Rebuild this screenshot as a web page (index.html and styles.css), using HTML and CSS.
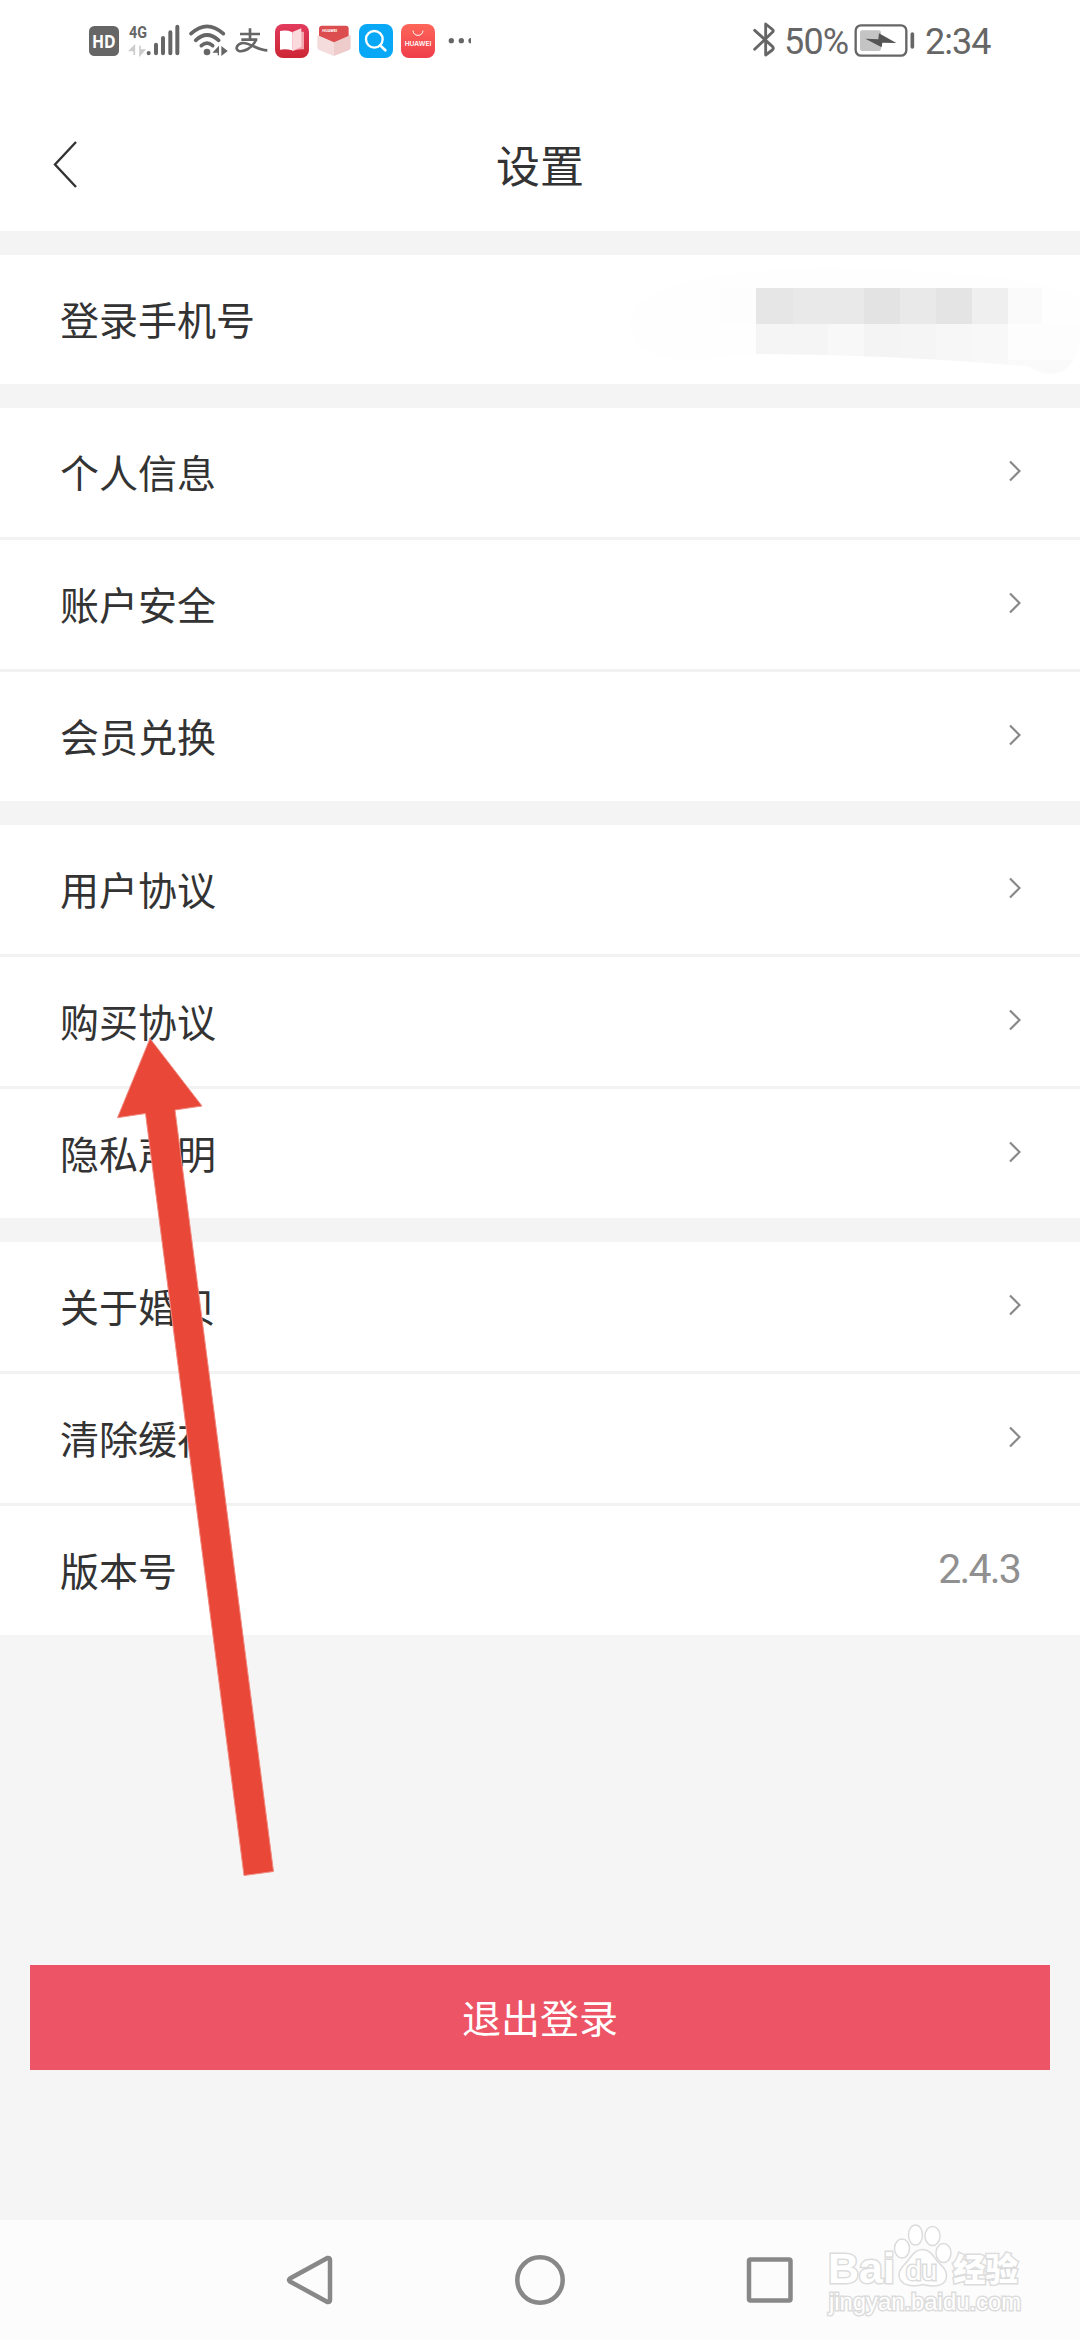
FILE: index.html
```html
<!DOCTYPE html>
<html lang="zh-CN">
<head>
<meta charset="utf-8">
<title>设置</title>
<link rel="stylesheet" href="styles.css">
</head>
<body>
<div class="screen">
  <div class="status">
    <div class="status-left">
      <svg width="35" height="65" viewBox="27 0 105 195"><rect x="27" y="48" width="90" height="90" rx="16" fill="#666"/><text class="hd" x="36" y="115" textLength="71" lengthAdjust="spacingAndGlyphs">HD</text></svg>
      <svg width="60" height="65" viewBox="132 0 180 195"><text class="net" x="147" y="83" textLength="54" lengthAdjust="spacingAndGlyphs">4G</text><path d="M163 135V108l-13 13h13M180 107v28l13-15h-13" fill="#ccc" stroke="#ccc" stroke-width="5"/><g stroke="#666" stroke-width="12" stroke-linecap="round"><path d="M206 129v1M228 104v26M249 84v46M271 67v63M292 50v80"/></g></svg>
      <svg width="46" height="65" viewBox="312 0 138 195"><g fill="none" stroke="#666" stroke-width="11" stroke-linecap="round"><path d="M333 71Q381 27 430 71M347 91Q381 59 416 91M364 107Q381 92 398 107"/></g><circle cx="381" cy="126" r="10" fill="#666"/><path d="M415 112v24M402 126l13-14v14zM426 112v22l14-11z" fill="#666" stroke="#666" stroke-width="4"/></svg>
      <svg width="41" height="65" viewBox="450 0 123 195"><g fill="none" stroke="#666" stroke-width="8"><path d="M480 72h60M510 55v33M484 89h48M528 90C515 117 490 126 477 123C464 119 470 101 488 99C510 98 533 121 562 121"/></g></svg>
      <svg width="42" height="65" viewBox="573 0 126 195"><defs><linearGradient id="read" x2="0" y2="1"><stop stop-color="#e23b5d"/><stop offset="1" stop-color="#cc2634"/></linearGradient></defs><rect x="585" y="42" width="102" height="102" rx="24" fill="url(#read)"/><path d="M600 63q19-4 36 3v55q-17-5-36-2z" fill="#fff"/><path d="M672 65q-19-1-36 6v52q17-6 36-5z" fill="#f3a6ad"/><path d="M637 66l27-11v55l-27 13z" fill="#fbdadd"/></svg>
      <svg width="42" height="65" viewBox="699 0 126 195"><rect x="717" y="47" width="89" height="60" rx="9" fill="#dc4d50"/><text class="box-label" x="727" y="66">HUAWEI</text><path d="M712 75l50 22v41l-43-17q-7-2-7-9z" fill="#f4dcdc"/><path d="M812 75l-50 22v41l44-17q6-2 6-9z" fill="#efcccc"/></svg>
      <svg width="42" height="65" viewBox="825 0 126 195"><rect x="837" y="42" width="102" height="102" rx="24" fill="#08a8f7"/><circle cx="883" cy="88" r="25" fill="none" stroke="#fff" stroke-width="7"/><path d="M900 106l16 15" stroke="#fff" stroke-width="8" stroke-linecap="round"/></svg>
      <svg width="42" height="65" viewBox="951 0 126 195"><defs><linearGradient id="shop" x2="0" y2="1"><stop stop-color="#ff6659"/><stop offset="1" stop-color="#ee3e4b"/></linearGradient></defs><rect x="963" y="42" width="102" height="102" rx="24" fill="url(#shop)"/><path d="M999 62q2 14 15 14t15-14" fill="none" stroke="#fff" stroke-width="3"/><text class="shop-label" x="974" y="107" textLength="80" lengthAdjust="spacingAndGlyphs">HUAWEI</text></svg>
      <svg width="34" height="65" viewBox="1077 0 102 195"><g fill="#666"><circle cx="1114" cy="92" r="8"/><circle cx="1144" cy="92" r="8"/><path d="M1173 84a8 8 0 0 0 0 16z"/></g></svg>
    </div>
    <div class="status-right">
      <svg width="24" height="65" viewBox="66 0 72 195"><path d="M71 61l53 48c4 4 4 7 0 11l-20 15V42l20 16c4 3 4 6 0 9L71 118" fill="none" stroke="#666" stroke-width="8.500" stroke-linecap="round" stroke-linejoin="round"/></svg>
      <span class="percent">50%</span>
      <svg class="battery" width="62" height="65" viewBox="369 0 186 195"><rect x="374" y="46" width="152" height="91" rx="16" fill="none" stroke="#666" stroke-width="7"/><rect x="387" y="61" width="63" height="62" rx="7" fill="#c4c4c4"/><path d="M403 86l39 2 2-18 52 29-42-1-2 14z" fill="#555"/><path d="M544 72v39" stroke="#666" stroke-width="11" stroke-linecap="round"/></svg>
      <span class="time">2:34</span>
    </div>
  </div>

  <header class="header">
    <svg class="back" width="28" height="56" viewBox="0 0 28 56"><path d="M24 3L3 25.500l21 22.500" fill="none" stroke="#333" stroke-width="2.400"/></svg>
    <h1 class="title">设置</h1>
  </header>

  <main class="groups">
    <section class="group">
      <div class="row"><span>登录手机号</span>
        <svg class="mosaic" width="480" height="129" viewBox="0 -15 1440 387"><defs><clipPath id="smear"><path d="M90 180C110 90 300 30 660 25C1020 25 1390 60 1440 120V250Q1420 340 1350 342Q1310 338 1290 320C1100 300 700 280 400 282Q290 310 240 300Q90 280 90 180z"/></clipPath></defs><g clip-path="url(#smear)"><path d="M0 0h1440v345H0z" fill="#fefefe"/><path d="M357 84h111v108H357z" fill="#fdfdfd"/><path d="M468 84h111v108H468z" fill="#e6e6e6"/><path d="M579 84h213v108H579z" fill="#e9e9e9"/><path d="M792 84h108v108H792z" fill="#e3e3e3"/><path d="M900 84h108v108H900z" fill="#e9e9e9"/><path d="M1008 84h108v108h-108z" fill="#e4e4e4"/><path d="M1116 84h108v108h-108z" fill="#efefef"/><path d="M1224 84h102v108h-102z" fill="#fafafa"/><path d="M468 192h216v120H468z" fill="#f5f5f5"/><path d="M684 192h108v120H684z" fill="#f8f8f8"/><path d="M792 192h108v120H792z" fill="#f4f4f4"/><path d="M900 192h108v120H900z" fill="#f5f5f5"/><path d="M1008 192h108v120h-108z" fill="#f7f7f7"/><path d="M1116 192h108v130h-108z" fill="#f8f8f8"/><path d="M1224 192h216v108h-216z" fill="#fdfdfd"/><path d="M1224 300h216v45h-216z" fill="#fafafa"/></g></svg>
      </div>
    </section>
    <section class="group">
      <div class="row"><span>个人信息</span><svg class="chevron" viewBox="0 0 12 22"><path d="M1 1.500l9.500 9.500-9.500 9.500"/></svg></div>
      <div class="row"><span>账户安全</span><svg class="chevron" viewBox="0 0 12 22"><path d="M1 1.500l9.500 9.500-9.500 9.500"/></svg></div>
      <div class="row"><span>会员兑换</span><svg class="chevron" viewBox="0 0 12 22"><path d="M1 1.500l9.500 9.500-9.500 9.500"/></svg></div>
    </section>
    <section class="group">
      <div class="row"><span>用户协议</span><svg class="chevron" viewBox="0 0 12 22"><path d="M1 1.500l9.500 9.500-9.500 9.500"/></svg></div>
      <div class="row"><span>购买协议</span><svg class="chevron" viewBox="0 0 12 22"><path d="M1 1.500l9.500 9.500-9.500 9.500"/></svg></div>
      <div class="row"><span>隐私声明</span><svg class="chevron" viewBox="0 0 12 22"><path d="M1 1.500l9.500 9.500-9.500 9.500"/></svg></div>
    </section>
    <section class="group">
      <div class="row"><span>关于婚贝</span><svg class="chevron" viewBox="0 0 12 22"><path d="M1 1.500l9.500 9.500-9.500 9.500"/></svg></div>
      <div class="row"><span>清除缓存</span><svg class="chevron" viewBox="0 0 12 22"><path d="M1 1.500l9.500 9.500-9.500 9.500"/></svg></div>
      <div class="row"><span>版本号</span><span class="version">2.4.3</span></div>
    </section>
  </main>

  <button class="logout">退出登录</button>

  <nav class="nav">
    <svg width="50" height="50" viewBox="0 0 50 50"><path d="M43.500 3Q46 2.500 46 5v40q0 2.500-2.500 2L6 26.500Q4 25 6 23.500z"/></svg>
    <svg width="50" height="50" viewBox="0 0 50 50"><circle cx="25" cy="25" r="22.700"/></svg>
    <svg width="50" height="50" viewBox="0 0 50 50"><rect x="4" y="4.500" width="41.500" height="41" rx="1.500"/></svg>
  </nav>

  <svg class="arrow" width="160" height="842" viewBox="116 1036 160 842"><path d="M150 1038.500L202 1106l-27 4L273.500 1871.500l-29.500 4L145.500 1113.500l-28 4.200z"/></svg>

  <svg class="watermark" width="230" height="110" viewBox="820 2215 230 110">
    <text class="wm-bai" x="828" y="2283" textLength="67" lengthAdjust="spacingAndGlyphs">Bai</text>
    <ellipse cx="902" cy="2248.500" rx="7.500" ry="9.500"/><ellipse cx="915.500" cy="2235" rx="7" ry="10"/><ellipse cx="932.500" cy="2236" rx="7.500" ry="9.500"/><ellipse cx="943.500" cy="2253" rx="7.500" ry="9.500"/>
    <path d="M922.500 2249.500c8 0 11 7 15 12 5 5 9 8 9 14 0 11-12 12-23.500 9-11 3-24 1-24-10 0-6 5-9 9-14 4-5 7-11 14.500-11z"/>
    <text class="wm-du" x="906" y="2280" textLength="31" lengthAdjust="spacingAndGlyphs">du</text>
    <text class="wm-cn" x="953" y="2281" textLength="65" lengthAdjust="spacingAndGlyphs">经验</text>
    <text class="wm-url" x="829" y="2310" textLength="192" lengthAdjust="spacingAndGlyphs">jingyan.baidu.com</text>
  </svg>
</div>
</body>
</html>
```

FILE: styles.css
```css
* {
  box-sizing: border-box;
}

body {
  margin: 0;
  background: #f4f4f4;
  color: #333;
  font-family: "Noto Sans CJK SC", sans-serif;
}

.screen {
  position: relative;
  display: flex;
  flex-direction: column;
  width: 1080px;
  height: 2340px;
  overflow: hidden;
  background: #f5f5f5;
}

.status {
  display: flex;
  justify-content: space-between;
  height: 96px;
  padding: 10px 88px 0 89px;
  background: #fff;
  color: #666;
  font-family: Roboto, sans-serif;
}

.status-left,
.status-right {
  display: flex;
  height: 65px;
}

.status-right {
  flex: 0 0 240px;
  margin-right: -1px;
  font-size: 36px;
  font-weight: 400;
  line-height: 65px;
}

.percent {
  width: 68px;
  margin-left: 7px;
  letter-spacing: -0.8px;
}

.battery {
  margin-left: 2px;
}

.time {
  margin-left: 9px;
  letter-spacing: -1px;
}

.hd {
  fill: #fff;
  font: 700 54px "Noto Sans", sans-serif;
}

.net {
  fill: #666;
  font: 700 49px Roboto, sans-serif;
}

.box-label {
  fill: #fff;
  font: 700 12px Roboto, sans-serif;
}

.shop-label {
  fill: #fff;
  font: 600 18px Inter, sans-serif;
}

.header {
  display: grid;
  grid-template-columns: 120px 1fr 120px;
  align-items: center;
  height: 135px;
  background: #fff;
}

.back {
  margin: 6px 0 0 52px;
}

.title {
  margin: 0;
  font-size: 44px;
  font-weight: 400;
  line-height: 60px;
  text-align: center;
}

.groups {
  display: flex;
  flex-direction: column;
  gap: 24px;
  padding-top: 24px;
  background: #f4f4f4;
}

.group {
  display: flex;
  flex-direction: column;
  gap: 3px;
  background: #f2f2f2;
}

.row {
  display: flex;
  align-items: center;
  justify-content: space-between;
  height: 129px;
  padding: 0 60px 3px;
  background: #fff;
  font-size: 39px;
  line-height: 60px;
}

.mosaic {
  margin: 0 -60px -3px 0;
}

.chevron {
  width: 12px;
  height: 22px;
  margin-right: -1px;
  fill: none;
  stroke: #888;
  stroke-width: 2.200;
}

.version {
  color: #909090;
  font-family: Roboto, sans-serif;
  font-size: 41px;
  letter-spacing: -1.800px;
}

.logout {
  height: 105px;
  margin: 330px 30px 150px;
  padding: 0 0 3px;
  border: 0;
  background: #ed5566;
  color: #fff;
  font-family: inherit;
  font-size: 39px;
}

.nav {
  display: flex;
  flex: 1;
  align-items: center;
  justify-content: space-between;
  padding: 0 286px 0 284px;
  background: #fcfcfc;
}

.nav svg {
  fill: none;
  stroke: #888;
  stroke-width: 4.500;
}

.nav svg:nth-child(2),
.nav svg:nth-child(3) {
  position: relative;
  left: 1px;
}

.arrow {
  position: absolute;
  left: 116px;
  top: 1036px;
  fill: #e94738;
  stroke: #f08b80;
  stroke-width: 1;
}

.watermark {
  position: absolute;
  left: 820px;
  top: 2215px;
  fill: #fff;
  stroke: #dcdcdc;
  stroke-width: 1.500;
}

.watermark text {
  paint-order: stroke;
  stroke-width: 3;
}

.wm-bai {
  font: 700 43px "Liberation Sans", sans-serif;
}

.wm-du {
  font: 400 28px "Liberation Sans", sans-serif;
}

.wm-cn {
  font: 900 32px "Noto Sans CJK SC", sans-serif;
}

.wm-url {
  font: 400 24px "Liberation Sans", sans-serif;
}
```
